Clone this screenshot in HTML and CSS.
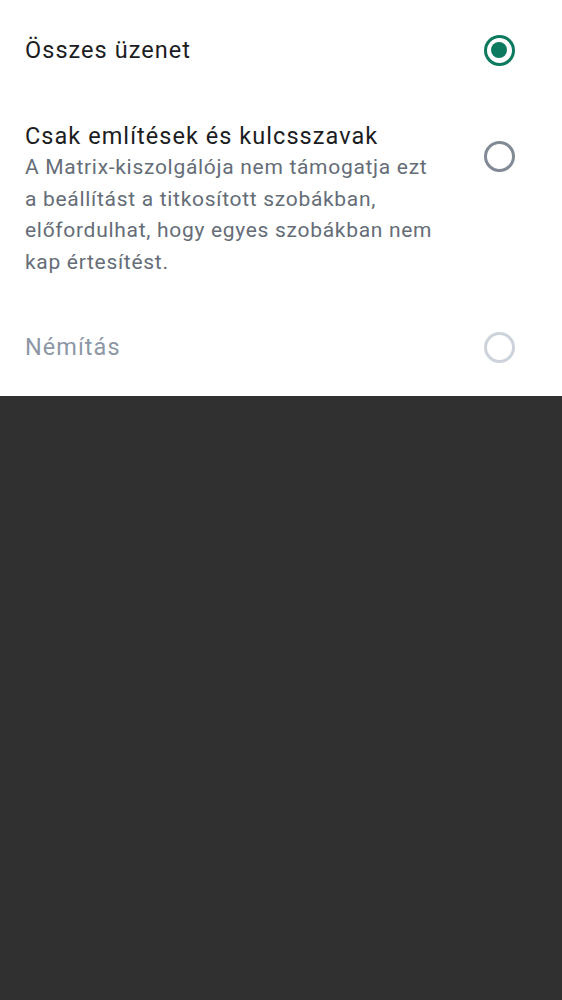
FILE: index.html
```html
<!DOCTYPE html>
<html lang="hu">
<head>
<meta charset="utf-8">
<link rel="stylesheet" href="styles.css">
</head>
<body>
<div class="sheet">
  <div class="row row-single">
    <div class="text"><div class="title">Összes üzenet</div></div>
    <div class="radio-box"><span class="radio checked"></span></div>
  </div>
  <div class="row row-multi">
    <div class="text">
      <div class="title">Csak említések és kulcsszavak</div>
      <div class="desc">A Matrix-kiszolgálója nem támogatja ezt a beállítást a titkosított szobákban, előfordulhat, hogy egyes szobákban nem kap értesítést.</div>
    </div>
    <div class="radio-box top"><span class="radio"></span></div>
  </div>
  <div class="row row-single last">
    <div class="text"><div class="title disabled">Némítás</div></div>
    <div class="radio-box"><span class="radio off"></span></div>
  </div>
</div>
</body>
</html>
```

FILE: styles.css
```css
html, body {
  margin: 0;
  padding: 0;
  background: #303030;
  font-family: Roboto, "Noto Sans", sans-serif;
}
.sheet {
  background: #ffffff;
  width: 562px;
  height: 396px;
}
.row {
  display: flex;
  align-items: center;
  padding: 0 39px 0 25px;
}
.row-single {
  height: 100px;
}
.row-multi {
  align-items: flex-start;
  height: 198px;
  padding-top: 20px;
  box-sizing: border-box;
}
.row.last {
  height: 98px;
}
.text {
  flex: 1;
  min-width: 0;
}
.title {
  font-size: 23.5px;
  line-height: 32px;
  letter-spacing: 1.05px;
  color: #1b1d22;
}
.title.disabled {
  color: #8d97a5;
}
.desc {
  font-size: 21px;
  line-height: 31.5px;
  letter-spacing: 0.7px;
  color: #656d77;
  max-width: 418px;
}
.radio-box {
  width: 48px;
  height: 48px;
  display: flex;
  align-items: center;
  justify-content: center;
  flex: none;
}
.radio-box.top {
  margin-top: 12px;
}
.radio {
  width: 31px;
  height: 31px;
  box-sizing: border-box;
  border-radius: 50%;
  border: 3px solid #818a95;
  display: flex;
  align-items: center;
  justify-content: center;
}
.radio.checked {
  border-color: #0b7a5e;
}
.radio.checked::after {
  content: "";
  width: 16px;
  height: 16px;
  border-radius: 50%;
  background: #0b7a5e;
}
.radio.off {
  border-color: #cdd3da;
}
```
